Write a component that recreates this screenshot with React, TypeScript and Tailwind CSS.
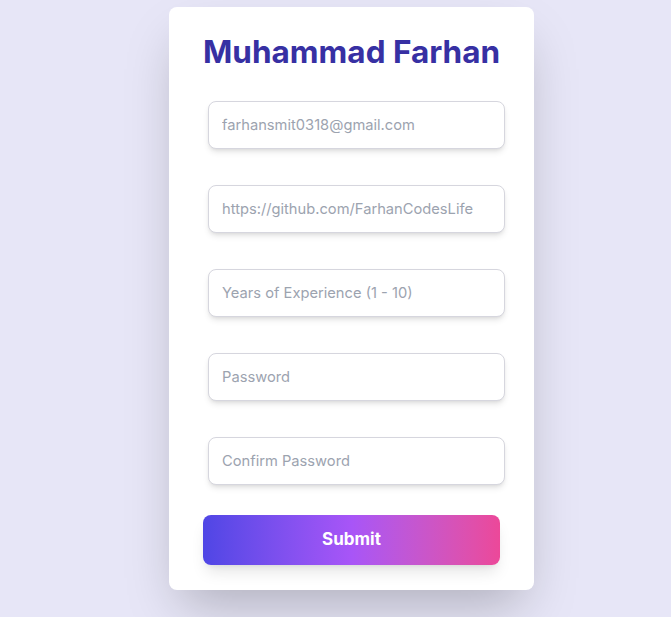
import React from "react";

const fields = [
    { type: "email", placeholder: "farhansmit0318@gmail.com" },
    { type: "url", placeholder: "https://github.com/FarhanCodesLife" },
    { type: "number", placeholder: "Years of Experience (1 - 10)" },
    { type: "password", placeholder: "Password" },
    { type: "password", placeholder: "Confirm Password" },
];

const App: React.FC = () => {
    return (
        <div
            className="min-h-screen bg-[#e7e6f7] flex justify-center items-start pl-[32px] pt-[7px]"
            style={{ fontFamily: "Inter, 'Noto Sans', sans-serif" }}
        >
            <form
                onSubmit={(e) => e.preventDefault()}
                className="w-[365px] bg-white rounded-lg shadow-[0_25px_50px_-12px_rgba(0,0,0,0.25)] px-[34px] pt-[21px] pb-[25px] flex flex-col"
            >
                <h1 className="text-center whitespace-nowrap text-[31.5px] leading-[48px] font-bold text-[#3730a3]">
                    Muhammad Farhan
                </h1>

                {/* Inputs */}
                <div className="mt-[25px] flex flex-col gap-[36px] pl-[5px] -mr-[5px]">
                    {fields.map((f) => (
                        <input
                            key={f.placeholder}
                            type={f.type}
                            placeholder={f.placeholder}
                            className="w-full h-[48px] px-[13px] rounded-lg border border-[#d6d6de] bg-white shadow-md text-[14.7px] text-gray-700 placeholder:text-[#9ca3af] outline-none"
                        />
                    ))}
                </div>

                <button
                    type="submit"
                    className="mt-[30px] w-full h-[50px] rounded-lg bg-gradient-to-r from-[#4f46e5] via-[#a855f7] to-[#ec4899] text-white font-bold text-[17px] shadow-lg"
                >
                    Submit
                </button>
            </form>
        </div>
    );
};

export default App;
